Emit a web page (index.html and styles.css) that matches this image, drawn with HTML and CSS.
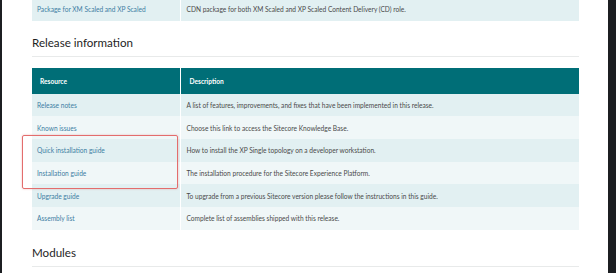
FILE: index.html
```html
<!DOCTYPE html>
<html lang="en">

<head>
    <meta charset="UTF-8">
    <title>Release information</title>
    <link rel="stylesheet" href="styles.css">
</head>

<body>
    <div class="page">
        <div class="content">
            <table class="docTable prev">
                <tr class="odd">
                    <td class="res"><a href="#">Package for XM Scaled and XP Scaled</a></td>
                    <td>CDN package for both XM Scaled and XP Scaled Content Delivery (CD) role.</td>
                </tr>
            </table>

            <h2 class="sectionTitle">Release information</h2>

            <div class="tableWrap">
                <table class="docTable">
                    <thead>
                        <tr>
                            <th class="res">Resource</th>
                            <th>Description</th>
                        </tr>
                    </thead>
                    <tbody>
                        <tr class="odd">
                            <td class="res"><a href="#">Release notes</a></td>
                            <td>A list of features, improvements, and fixes that have been implemented in this release.</td>
                        </tr>
                        <tr>
                            <td class="res"><a href="#">Known issues</a></td>
                            <td>Choose this link to access the Sitecore Knowledge Base.</td>
                        </tr>
                        <tr class="odd">
                            <td class="res"><a href="#">Quick installation guide</a></td>
                            <td>How to install the XP Single topology on a developer workstation.</td>
                        </tr>
                        <tr>
                            <td class="res"><a href="#">Installation guide</a></td>
                            <td>The installation procedure for the Sitecore Experience Platform.</td>
                        </tr>
                        <tr class="odd">
                            <td class="res"><a href="#">Upgrade guide</a></td>
                            <td>To upgrade from a previous Sitecore version please follow the instructions in this guide.</td>
                        </tr>
                        <tr>
                            <td class="res"><a href="#">Assembly list</a></td>
                            <td>Complete list of assemblies shipped with this release.</td>
                        </tr>
                    </tbody>
                </table>
                <div class="highlight"></div>
            </div>

            <h2 class="sectionTitle modules">Modules</h2>
        </div>
    </div>
</body>

</html>
```

FILE: styles.css
```css
* {
  margin: 0;
  padding: 0;
  box-sizing: border-box;
}
html,
body {
  width: 100%;
  height: 100%;
  overflow: hidden;
  background-color: #1c1e21;
  font-family: "Lato", "Open Sans", sans-serif;
}

.page {
  margin-left: 2px;
  width: 606px;
  height: 273px;
  background-color: white;
  overflow: hidden;
}
.content {
  padding-left: 30px;
  width: 577px;
}

.docTable {
  width: 547px;
  border-collapse: collapse;
  table-layout: fixed;
  font-size: 6.6px;
  color: #4a4a4a;
}
.docTable th,
.docTable td {
  text-align: left;
  padding: 0 6px;
  height: 22.67px;
  background-color: #f0f7f8;
}
.docTable th + th,
.docTable td + td {
  border-left: 1px solid white;
}
.docTable .res {
  width: 148px;
  padding-left: 5px;
}
.docTable th {
  padding-left: 9px;
}
.docTable th.res {
  padding-left: 8px;
}
.docTable .odd td {
  background-color: #e2f0f2;
}
.docTable th {
  height: 26px;
  background-color: #006e77;
  color: white;
  font-weight: 700;
}
.docTable a {
  color: #3d7ea3;
  text-decoration: none;
}
.docTable.prev {
  margin-top: -2px;
}

.sectionTitle {
  margin-top: 15px;
  padding-bottom: 7px;
  border-bottom: 1px solid #e8eaea;
  font-size: 11.6px;
  font-weight: 400;
  color: #1e1e1e;
}
.sectionTitle.modules {
  margin-top: 16px;
}

.tableWrap {
  position: relative;
  margin-top: 11px;
}
.highlight {
  position: absolute;
  left: -10px;
  top: 67px;
  width: 156px;
  height: 54px;
  border: 1.5px solid #e36d6d;
  border-radius: 2px;
  box-shadow: 0 0 2px rgba(227, 109, 109, 0.5);
}
```
